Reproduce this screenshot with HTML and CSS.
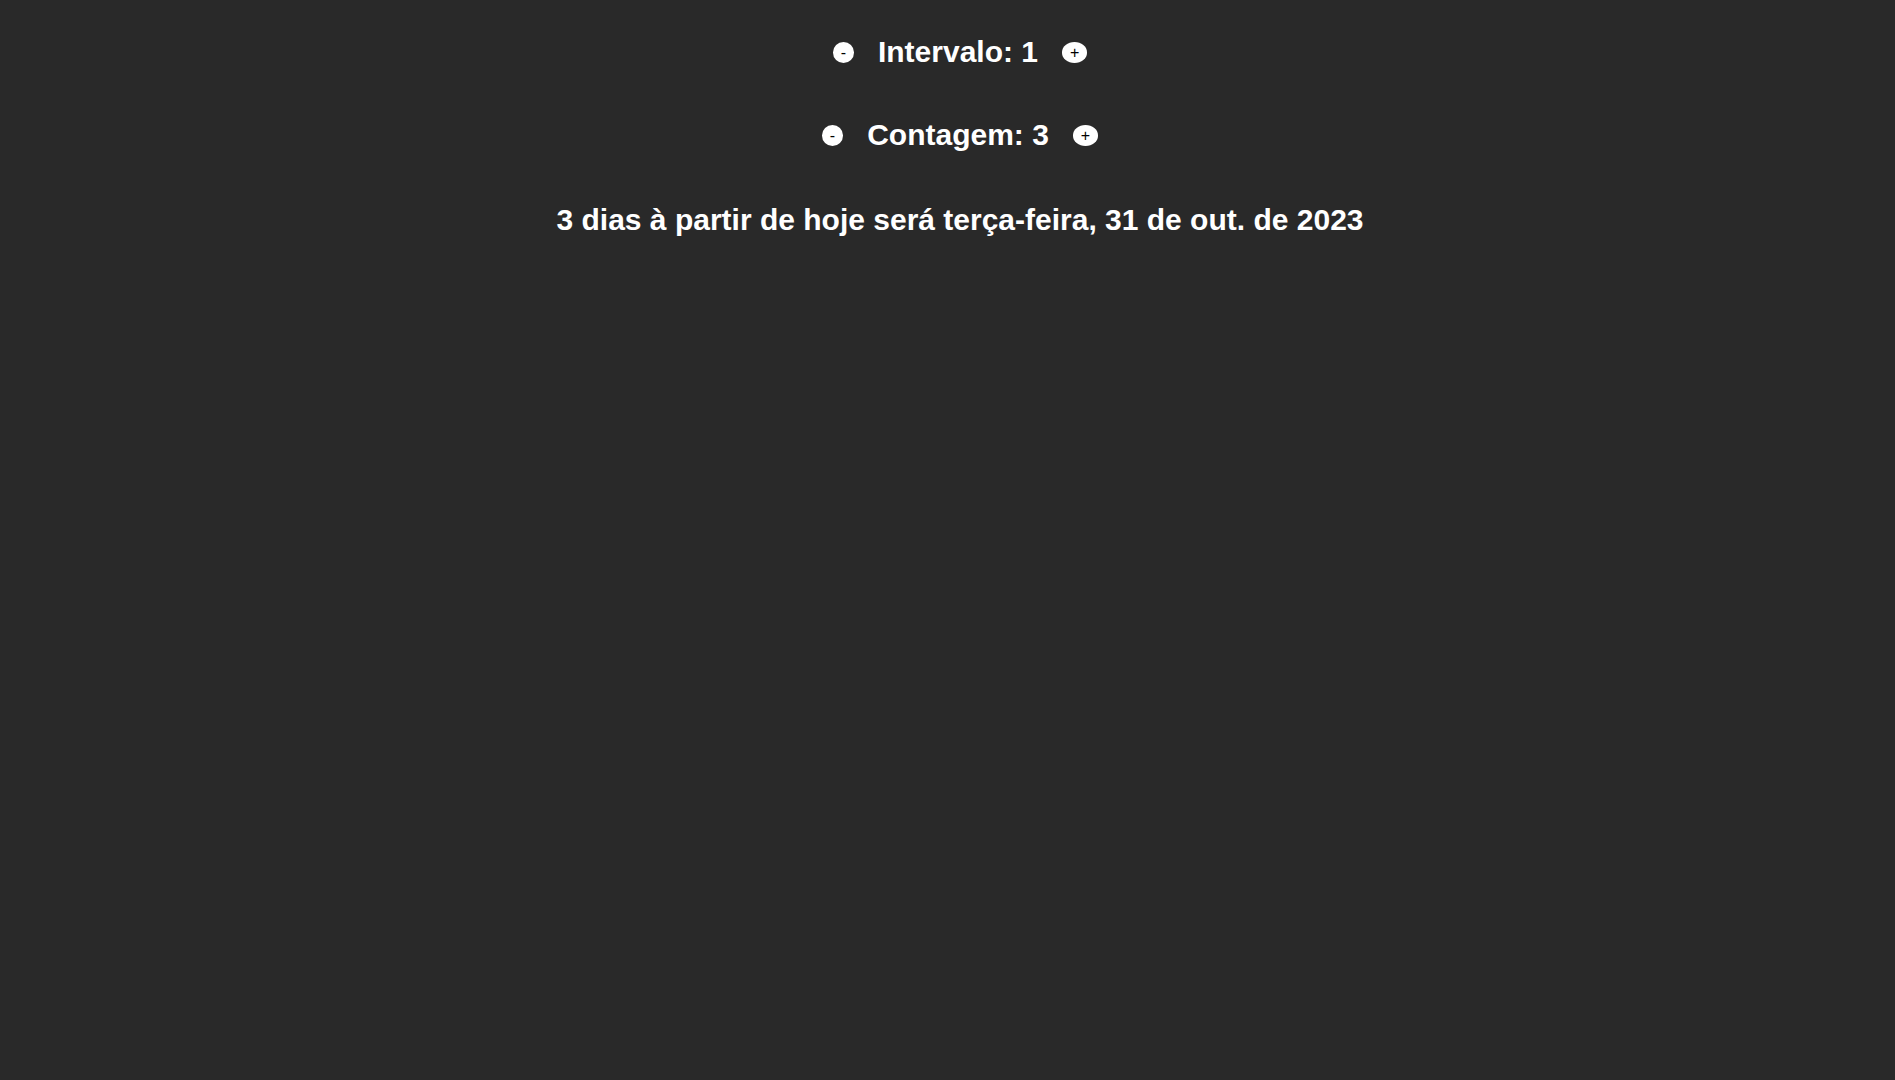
FILE: index.html
```html
<!DOCTYPE html>
<html lang="pt-BR">
<head>
<meta charset="utf-8">
<title>Contagem de dias</title>
<link rel="stylesheet" href="styles.css">
</head>
<body>
  <main class="app">
    <div class="row row-interval">
      <button class="step">-</button>
      <span class="label">Intervalo: 1</span>
      <button class="step">+</button>
    </div>
    <div class="row row-count">
      <button class="step">-</button>
      <span class="label">Contagem: 3</span>
      <button class="step">+</button>
    </div>
    <p class="result">3 dias à partir de hoje será terça-feira, 31 de out. de 2023</p>
  </main>
</body>
</html>
```

FILE: styles.css
```css
html, body {
  margin: 0;
  padding: 0;
  background: #292929;
  min-height: 100vh;
}

body {
  font-family: "Liberation Sans", Arial, sans-serif;
  color: #ffffff;
}

.app {
  display: flex;
  flex-direction: column;
  align-items: center;
  padding-top: 35px;
  padding-left: 25px;
}

.row {
  display: flex;
  align-items: center;
  gap: 24px;
  height: 34px;
}

.row-count {
  margin-top: 49px;
}

.label {
  font-size: 30px;
  font-weight: bold;
  line-height: 34px;
}

.step {
  height: 21px;
  min-width: 21px;
  padding: 0 8px;
  margin-top: 1px;
  border: none;
  border-radius: 50%;
  background: #ffffff;
  color: #000000;
  font-family: "Liberation Sans", Arial, sans-serif;
  font-size: 16px;
  line-height: 21px;
  cursor: pointer;
}

.result {
  margin: 51px 0 0;
  font-size: 30px;
  font-weight: bold;
  line-height: 34px;
}
```
